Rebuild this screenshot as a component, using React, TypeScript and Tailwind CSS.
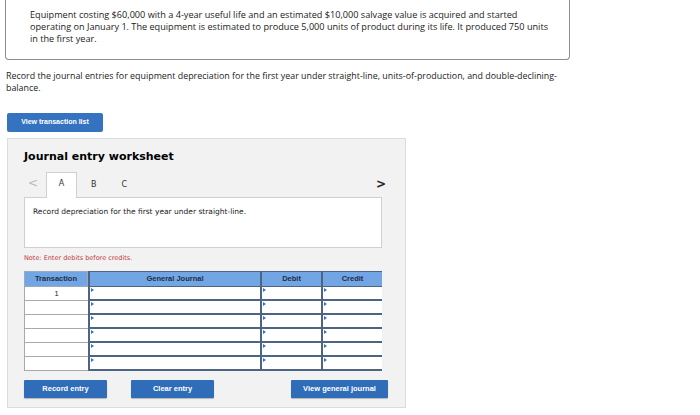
import React from "react";

const rows = [1, 2, 3, 4, 5, 6];

function Marker() {
  return (
    <span className="absolute left-[1px] top-[1px] w-0 h-0 border-y-[2px] border-y-transparent border-l-[3px] border-l-[#3b6fc4]" />
  );
}

function EntryCell({ className = "" }: { className?: string }) {
  return (
    <div className={`relative bg-white border-l-[2px] border-b-[2px] border-[#4d6482] h-[14px] ${className}`}>
      <Marker />
    </div>
  );
}

function BlueButton({ label, className = "" }: { label: string; className?: string }) {
  return (
    <button
      className={`h-[18px] bg-[#2f6db8] text-white text-[7.5px] font-bold rounded-[1px] shadow-[0_1px_1px_rgba(0,0,0,0.25)] ${className}`}
      style={{ fontFamily: "'Liberation Sans', Arial, sans-serif" }}
    >
      {label}
    </button>
  );
}

export default function App() {
  return (
    <div className="w-[700px] h-[415px] bg-white overflow-hidden text-[#222]" style={{ fontFamily: "'Open Sans', Lato, sans-serif" }}>
      {/* Question */}
      <div className="ml-[5px] w-[565px] h-[60px] border border-t-0 border-[#8c8c8c] rounded-b-[4px] pl-[24px] pt-[9px] text-[9.15px] leading-[12px] whitespace-nowrap">
        Equipment costing $60,000 with a 4-year useful life and an estimated $10,000 salvage value is acquired and started
        <br />
        operating on January 1. The equipment is estimated to produce 5,000 units of product during its life. It produced 750 units
        <br />
        in the first year.
      </div>

      <p className="mt-[10px] ml-[6px] text-[8.9px] leading-[12px] whitespace-nowrap">
        Record the journal entries for equipment depreciation for the first year under straight-line, units-of-production, and double-declining-
        <br />
        balance.
      </p>

      <button
        className="mt-[19px] ml-[7px] w-[96px] h-[19px] bg-[#3573c0] text-white text-[7px] font-bold rounded-[2px] block"
        style={{ fontFamily: "'Liberation Sans', Arial, sans-serif" }}
      >
        View transaction list
      </button>

      {/* Worksheet */}
      <div className="mt-[6px] ml-[7px] w-[399px] h-[270px] bg-[#f2f2f2] border border-[#dcdcdc] pl-[16px]">
        <h2
          className="pt-[10px] text-[11px] leading-[16px] font-bold text-black"
          style={{ fontFamily: "'DejaVu Sans', Verdana, sans-serif" }}
        >
          Journal entry worksheet
        </h2>

        <div
          className="mt-[8px] w-[358px] flex items-end h-[25px] text-[8px] relative"
          style={{ fontFamily: "'DejaVu Sans', Verdana, sans-serif" }}
        >
          <span className="w-[22px] pl-[4px] text-[#bbb] text-[12px] self-start pt-[1px]">&lt;</span>
          <div className="relative z-10 w-[31px] h-[26px] bg-white border border-b-0 border-[#cfcfcf] flex items-start justify-center pt-[5px] text-[#333]">
            A
          </div>
          <span className="ml-[14px] self-start pt-[6px] text-[#333]">B</span>
          <span className="ml-[25px] self-start pt-[6px] text-[#333]">C</span>
          <span className="ml-auto mr-[-4px] self-start pt-[2px] text-[12px] font-bold text-[#222]">&gt;</span>
        </div>

        <div
          className="-mt-[1px] w-[358px] h-[51px] bg-white border border-[#cfcfcf] pl-[8px] pt-[8px] text-[7.5px] text-[#222]"
          style={{ fontFamily: "'DejaVu Sans', Verdana, sans-serif" }}
        >
          Record depreciation for the first year under straight-line.
        </div>

        <div
          className="mt-[5px] text-[6.5px] leading-[10px] text-[#c2383a]"
          style={{ fontFamily: "'DejaVu Sans', Verdana, sans-serif" }}
        >
          Note: Enter debits before credits.
        </div>

        {/* Table */}
        <div
          className="mt-[8px] w-[358px] grid grid-cols-[64px_172px_61px_61px] border-r-[2px] border-[#4d6482]"
          style={{ fontFamily: "'Liberation Sans', Arial, sans-serif" }}
        >
          <div className="h-[16px] bg-[#72a5e4] border border-[#9ab] text-[7.5px] font-bold text-[#1e2d45] flex items-center justify-center">
            Transaction
          </div>
          <div className="h-[16px] bg-[#72a5e4] border-y border-l-[2px] border-[#4d6482] text-[7.5px] font-bold text-[#1e2d45] flex items-center justify-center">
            General Journal
          </div>
          <div className="h-[16px] bg-[#72a5e4] border-y border-l-[2px] border-[#4d6482] text-[7.5px] font-bold text-[#1e2d45] flex items-center justify-center">
            Debit
          </div>
          <div className="h-[16px] bg-[#72a5e4] border-y border-l-[2px] border-[#4d6482] text-[7.5px] font-bold text-[#1e2d45] flex items-center justify-center">
            Credit
          </div>
          {rows.map((r) => (
            <React.Fragment key={r}>
              <div className="h-[14px] bg-white border-l border-b border-[#a9a9a9] text-[7.5px] flex items-start justify-center pt-[1px]">
                {r === 1 ? "1" : ""}
              </div>
              <EntryCell />
              <EntryCell />
              <EntryCell />
            </React.Fragment>
          ))}
        </div>

        <div className="mt-[9px] flex">
          <BlueButton label="Record entry" className="w-[83px]" />
          <BlueButton label="Clear entry" className="ml-[24px] w-[83px]" />
          <BlueButton label="View general journal" className="ml-[77px] w-[97px]" />
        </div>
      </div>
    </div>
  );
}
